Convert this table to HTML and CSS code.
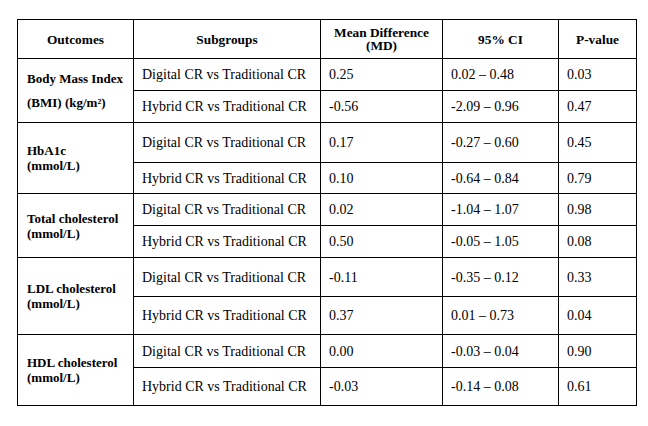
FILE: index.html
```html
<!DOCTYPE html>
<html>
<head>
<meta charset="utf-8">
<link rel="stylesheet" href="styles.css">
</head>
<body>
<table class="results">
  <colgroup>
    <col class="c1"><col class="c2"><col class="c3"><col class="c4"><col class="c5">
  </colgroup>
  <thead>
    <tr class="h39">
      <th>Outcomes</th>
      <th>Subgroups</th>
      <th class="tight">Mean Difference<br>(MD)</th>
      <th>95% CI</th>
      <th>P-value</th>
    </tr>
  </thead>
  <tbody>
    <tr class="h32">
      <td rowspan="2" class="outcome wide">Body Mass Index<br>(BMI) (kg/m²)</td>
      <td>Digital CR vs Traditional CR</td><td>0.25</td><td>0.02 – 0.48</td><td>0.03</td>
    </tr>
    <tr class="h32">
      <td>Hybrid CR vs Traditional CR</td><td>-0.56</td><td>-2.09 – 0.96</td><td>0.47</td>
    </tr>
    <tr class="h40">
      <td rowspan="2" class="outcome">HbA1c<br>(mmol/L)</td>
      <td>Digital CR vs Traditional CR</td><td>0.17</td><td>-0.27 – 0.60</td><td>0.45</td>
    </tr>
    <tr class="h31">
      <td>Hybrid CR vs Traditional CR</td><td>0.10</td><td>-0.64 – 0.84</td><td>0.79</td>
    </tr>
    <tr class="h32">
      <td rowspan="2" class="outcome">Total cholesterol<br>(mmol/L)</td>
      <td>Digital CR vs Traditional CR</td><td>0.02</td><td>-1.04 – 1.07</td><td>0.98</td>
    </tr>
    <tr class="h32">
      <td>Hybrid CR vs Traditional CR</td><td>0.50</td><td>-0.05 – 1.05</td><td>0.08</td>
    </tr>
    <tr class="h39">
      <td rowspan="2" class="outcome">LDL cholesterol<br>(mmol/L)</td>
      <td>Digital CR vs Traditional CR</td><td>-0.11</td><td>-0.35 – 0.12</td><td>0.33</td>
    </tr>
    <tr class="h38">
      <td>Hybrid CR vs Traditional CR</td><td>0.37</td><td>0.01 – 0.73</td><td>0.04</td>
    </tr>
    <tr class="h33">
      <td rowspan="2" class="outcome">HDL cholesterol<br>(mmol/L)</td>
      <td>Digital CR vs Traditional CR</td><td>0.00</td><td>-0.03 – 0.04</td><td>0.90</td>
    </tr>
    <tr class="h38">
      <td>Hybrid CR vs Traditional CR</td><td>-0.03</td><td>-0.14 – 0.08</td><td>0.61</td>
    </tr>
  </tbody>
</table>
</body>
</html>
```

FILE: styles.css
```css
html, body {
  margin: 0;
  padding: 0;
  background: #ffffff;
}
body {
  font-family: "Liberation Serif", "Times New Roman", serif;
  font-size: 14px;
  color: #000000;
}
.results {
  margin: 19px 0 0 17px;
  border-collapse: collapse;
  table-layout: fixed;
  width: 619px;
}
.c1 { width: 116px; }
.c2 { width: 187px; }
.c3 { width: 122px; }
.c4 { width: 116px; }
.c5 { width: 78px; }
.results th,
.results td {
  border: 1px solid #000000;
  padding: 0 8px;
  vertical-align: middle;
  line-height: 15px;
  white-space: nowrap;
  overflow: hidden;
}
.results th {
  font-size: 13.33px;
  font-weight: bold;
  text-align: center;
}
.results td {
  text-align: left;
}
.results th.tight {
  line-height: 13px;
}
.results td.outcome {
  font-size: 13px;
  font-weight: bold;
  padding-left: 9px;
}
.results td.wide {
  line-height: 24px;
}
.h31 { height: 31px; }
.h32 { height: 32px; }
.h33 { height: 33px; }
.h38 { height: 38px; }
.h39 { height: 39px; }
.h40 { height: 40px; }
```
